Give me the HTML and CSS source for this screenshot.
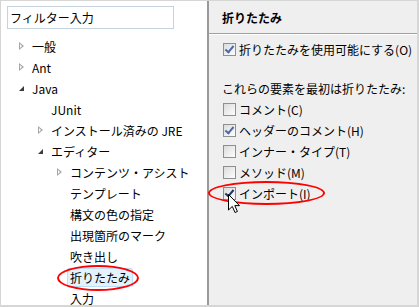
FILE: index.html
```html
<!DOCTYPE html>
<html lang="ja">
<head>
    <meta charset="UTF-8">
    <title>折りたたみ</title>
    <link rel="stylesheet" href="styles.css">
</head>
<body>

<div class="janela">
    <div class="arvore">
        <div class="filtro">フィルター入力</div>

        <div class="no n0"><span class="seta fechada"></span><span class="rotulo">一般</span></div>
        <div class="no n0"><span class="seta fechada"></span><span class="rotulo">Ant</span></div>
        <div class="no n0"><span class="seta aberta"></span><span class="rotulo">Java</span></div>
        <div class="no n1"><span class="seta"></span><span class="rotulo">JUnit</span></div>
        <div class="no n1"><span class="seta fechada"></span><span class="rotulo">インストール済みの JRE</span></div>
        <div class="no n1"><span class="seta aberta"></span><span class="rotulo">エディター</span></div>
        <div class="no n2"><span class="seta fechada"></span><span class="rotulo">コンテンツ・アシスト</span></div>
        <div class="no n2"><span class="seta"></span><span class="rotulo">テンプレート</span></div>
        <div class="no n2"><span class="seta"></span><span class="rotulo">構文の色の指定</span></div>
        <div class="no n2"><span class="seta"></span><span class="rotulo">出現箇所のマーク</span></div>
        <div class="no n2"><span class="seta"></span><span class="rotulo">吹き出し</span></div>
        <div class="no n2"><span class="seta"></span><span class="rotulo selecionado">折りたたみ</span></div>
        <div class="no n2"><span class="seta"></span><span class="rotulo">入力</span></div>

        <div class="circulo circulo-arvore"></div>
    </div>

    <div class="painel">
        <div class="titulo">折りたたみ</div>

        <div class="opcoes">
            <div class="opcao"><span class="caixa marcada"></span>折りたたみを使用可能にする(O)</div>

            <div class="legenda">これらの要素を最初は折りたたみ:</div>
            <div class="opcao"><span class="caixa"></span>コメント(C)</div>
            <div class="opcao"><span class="caixa marcada"></span>ヘッダーのコメント(H)</div>
            <div class="opcao"><span class="caixa"></span>インナー・タイプ(T)</div>
            <div class="opcao"><span class="caixa"></span>メソッド(M)</div>
            <div class="opcao"><span class="caixa marcada forte"></span>インポート(I)</div>
        </div>

        <div class="circulo circulo-painel"></div>
        <svg class="cursor" width="13" height="20" viewBox="0 0 13 20">
            <path d="M0.5 0.5 L0.5 16 L4.3 12.4 L7 18.5 L9.4 17.5 L6.8 11.6 L11.5 11.6 Z" fill="#fff" stroke="#000" stroke-width="1"/>
        </svg>
    </div>
</div>

</body>
</html>
```

FILE: styles.css
```css
body {
    margin: 0;
    font-family: "Noto Sans CJK JP", "Noto Sans", sans-serif;
    font-size: 12px;
    color: #000;
}
.janela {
    width: 419px;
    height: 307px;
    box-sizing: border-box;
    display: flex;
    border-top: 1px solid #d6d6d6;
    border-left: 1px solid #d6d6d6;
    border-right: 2px solid #d6d6d6;
    border-bottom: 2px solid #d6d6d6;
}

/* lado esquerdo - arvore */
.arvore {
    position: relative;
    width: 206px;
    background: #fff;
    border-right: 2px solid #9a9a9a;
}
.filtro {
    margin: 5px 0 0 6px;
    width: 167px;
    height: 23px;
    box-sizing: border-box;
    border: 1px solid #c5d2df;
    padding-left: 2px;
    line-height: 21px;
    font-size: 12px;
}
.no {
    display: flex;
    align-items: center;
    height: 21px;
}
.filtro + .no {
    margin-top: 7px;
}
.n0 { padding-left: 16px; }
.n1 { padding-left: 35px; }
.n2 { padding-left: 54px; }
.seta {
    width: 12px;
    height: 21px;
    flex: none;
    position: relative;
}
.seta.fechada::before {
    content: "";
    position: absolute;
    left: 2px;
    top: 6px;
    width: 0;
    height: 0;
    border-top: 4px solid transparent;
    border-bottom: 4px solid transparent;
    border-left: 5px solid #a6a6a6;
}
.seta.fechada::after {
    content: "";
    position: absolute;
    left: 3px;
    top: 8px;
    width: 0;
    height: 0;
    border-top: 2px solid transparent;
    border-bottom: 2px solid transparent;
    border-left: 2.5px solid #fff;
}
.seta.aberta::before {
    content: "";
    position: absolute;
    left: 2px;
    top: 8px;
    width: 0;
    height: 0;
    border-left: 5px solid transparent;
    border-bottom: 5px solid #3c3c3c;
}
.rotulo {
    padding: 0 2px;
    border: 1px solid transparent;
    line-height: 17px;
    white-space: nowrap;
}
.selecionado {
    background: #e3f2fb;
    border-color: #b9e0f6;
    border-radius: 2px;
}

/* lado direito - painel */
.painel {
    position: relative;
    flex: 1;
    background: #efefef;
}
.titulo {
    height: 32px;
    line-height: 34px;
    padding-left: 13px;
    font-weight: bold;
    border-bottom: 1px solid #a0a0a0;
    box-shadow: 0 1px 0 #fff;
}
.opcoes {
    padding: 5px 0 0 14px;
}
.opcao {
    display: flex;
    align-items: center;
    height: 21px;
    white-space: nowrap;
}
.legenda {
    height: 20px;
    line-height: 20px;
    margin: 19px 0 0 -1px;
}
.caixa {
    width: 13px;
    height: 13px;
    box-sizing: border-box;
    border: 1px solid #8e8f8f;
    background: linear-gradient(135deg, #dcdcdc, #fdfdfd);
    margin-right: 3px;
    flex: none;
    position: relative;
}
.caixa.marcada::after {
    content: "";
    position: absolute;
    left: 3px;
    top: 0px;
    width: 3px;
    height: 7px;
    border-right: 2px solid #4a6aa8;
    border-bottom: 2px solid #4a6aa8;
    transform: rotate(40deg);
}
.caixa.forte::after {
    border-color: #1f3466;
}

/* marcacoes vermelhas */
.circulo {
    position: absolute;
    border: 2px solid #f00;
    border-radius: 50%;
    box-sizing: border-box;
}
.circulo-arvore {
    left: 56px;
    top: 264px;
    width: 82px;
    height: 26px;
}
.circulo-painel {
    left: -1px;
    top: 180px;
    width: 117px;
    height: 24px;
}
.cursor {
    position: absolute;
    left: 19px;
    top: 193px;
}
```
